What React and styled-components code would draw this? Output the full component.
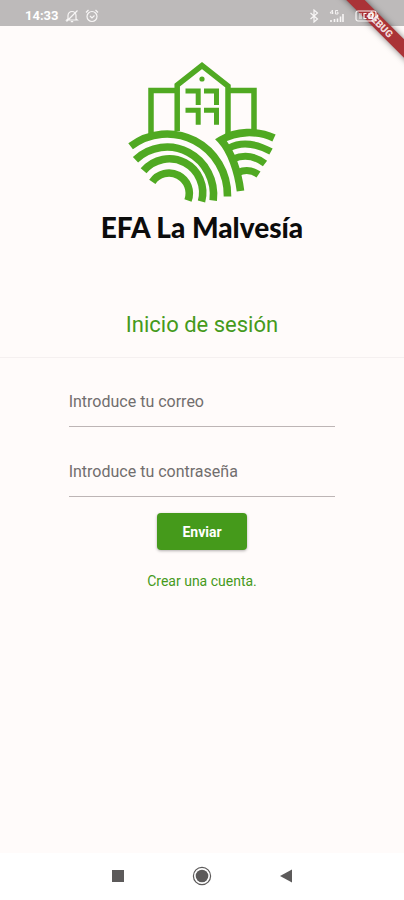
import React from "react";
import styled, { createGlobalStyle, ThemeProvider } from "styled-components";

const theme = {
  colors: {
    background: "#fffbfa",
    statusBar: "#bdbaba",
    green: "#459a1b",
    logo: "#50a922",
    hint: "#716e6e",
    line: "#bdb5b5",
    divider: "#f5f0f0",
    ribbon: "#aa3337",
    nav: "#5c5a5a",
  },
  font: `Roboto, "Liberation Sans", sans-serif`,
};

const GlobalStyle = createGlobalStyle`
  *, *::before, *::after {
    box-sizing: border-box;
  }

  body {
    margin: 0;
    font-family: ${theme.font};
    background-color: ${theme.colors.background};
  }
`;

const Screen = styled.div`
  position: relative;
  display: flex;
  flex-direction: column;
  min-height: 100vh;
  overflow: hidden;
`;

const StatusBarLayout = styled.header`
  display: flex;
  align-items: center;
  justify-content: space-between;
  height: 26px;
  padding: 6px 25px 0 25px;
  background-color: ${({ theme }) => theme.colors.statusBar};
  color: #fff;
`;

const StatusGroup = styled.div`
  position: relative;
  z-index: 2;
  display: flex;
  align-items: center;
  gap: ${({ $gap }) => $gap};
`;

const Clock = styled.time`
  font-size: 13px;
  line-height: 16px;
  font-weight: 700;
`;

const StatusIcon = styled.svg`
  display: block;
  fill: none;
  stroke: #f8f6f6;
  stroke-width: 1.2;
`;

const RibbonCorner = styled.div`
  position: absolute;
  z-index: 1;
  top: 0;
  right: 0;
  width: 80px;
  height: 80px;
  overflow: hidden;
  pointer-events: none;
`;

const Ribbon = styled.div`
  position: absolute;
  top: 18px;
  right: -36px;
  width: 120px;
  height: 13px;
  transform: rotate(45deg);
  background-color: ${({ theme }) => theme.colors.ribbon};
  box-shadow: 0 0 6px rgba(0, 0, 0, 0.5);
  color: #f3dcdc;
  font-size: 10px;
  line-height: 13px;
  font-weight: 900;
  text-align: center;
`;

const Content = styled.main`
  flex: 1;
  display: flex;
  flex-direction: column;
`;

const Brand = styled.div`
  display: flex;
  flex-direction: column;
  align-items: center;
  padding-top: 34px;
`;

const LogoDrawing = styled.svg`
  display: block;
  fill: none;
  stroke: ${({ theme }) => theme.colors.logo};
`;

const BrandName = styled.div`
  margin-top: 7px;
  font-family: Lato, "Liberation Sans", sans-serif;
  font-size: 28px;
  line-height: 32px;
  font-weight: 900;
  color: #0c0c0c;
`;

const Title = styled.h1`
  margin: 69px 0 0;
  padding-bottom: 19px;
  border-bottom: 1px solid ${({ theme }) => theme.colors.divider};
  font-size: 22px;
  line-height: 26px;
  font-weight: 400;
  text-align: center;
  color: ${({ theme }) => theme.colors.green};
`;

const Form = styled.form`
  display: flex;
  flex-direction: column;
  align-items: center;
  padding: 19px 17% 0;
`;

const Field = styled.input`
  width: 100%;
  height: 50px;
  margin-bottom: 20px;
  padding: 0;
  border: 0;
  border-bottom: 1px solid ${({ theme }) => theme.colors.line};
  border-radius: 0;
  outline: none;
  background: transparent;
  font-family: inherit;
  font-size: 16px;
  color: #222;

  &::placeholder {
    color: ${({ theme }) => theme.colors.hint};
    opacity: 1;
  }

  &:focus {
    border-color: ${({ theme }) => theme.colors.green};
  }
`;

const SubmitButton = styled.button`
  height: 37px;
  margin-top: -4px;
  padding: 0 25px;
  border: 0;
  border-radius: 4px;
  background-color: ${({ theme }) => theme.colors.green};
  box-shadow: 0 1px 3px rgba(0, 0, 0, 0.3);
  font-family: inherit;
  font-size: 14px;
  font-weight: 700;
  color: #fff;
  cursor: pointer;
`;

const SignUpLink = styled.a`
  margin-top: 22px;
  font-size: 14px;
  line-height: 18px;
  text-decoration: none;
  color: ${({ theme }) => theme.colors.green};
`;

const NavBar = styled.nav`
  display: flex;
  align-items: center;
  justify-content: center;
  gap: 60px;
  height: 47px;
  padding-bottom: 2px;
  background-color: #fff;
`;

const NavButton = styled.button`
  display: flex;
  align-items: center;
  justify-content: center;
  width: 24px;
  height: 24px;
  padding: 0;
  border: 0;
  background: none;
  color: ${({ theme }) => theme.colors.nav};
  cursor: pointer;
`;

const BellOffIcon = () => (
  <StatusIcon width="14" height="14" viewBox="0 0 14 14">
    <path d="M3 10V6.500a4 4 0 0 1 8 0V10l1.200 1H1.800zM5.800 12.700h2.400M12.500 1.500l-11 11" />
  </StatusIcon>
);

const AlarmIcon = () => (
  <StatusIcon width="14" height="14" viewBox="0 0 14 14">
    <circle cx="7" cy="7.500" r="5" />
    <path d="M1 3.500L3.500 1M13 3.500L10.500 1M5 7l2 2 2.500-2.500" />
  </StatusIcon>
);

const BluetoothIcon = () => (
  <StatusIcon width="10" height="14" viewBox="0 0 10 14">
    <path d="M1.500 4l7 6L5 13V1l3.500 3-7 6" />
  </StatusIcon>
);

const SignalIcon = () => (
  <StatusIcon width="16" height="14" viewBox="0 0 16 14">
    <path d="M3.500 5V1L1 4h3.500M9 1.500H6.500V5H9V3.200H7.800" strokeWidth="0.900" />
    <path d="M2 13v-2M5.500 13v-3M8.500 13V9.500M11.500 13V7.500M14 13V5" strokeWidth="1.600" />
  </StatusIcon>
);

const BatteryIcon = () => (
  <StatusIcon width="24" height="14" viewBox="0 0 24 14">
    <rect x="1" y="2" width="20" height="10" rx="2" />
    <path d="M22.500 5.500v3" strokeWidth="1.600" />
    <path d="M4 5h3M4 7h3M4 9h3M11.500 4.500H9v5h2.500M14 4.500h3.500v5H14zM14 7h3.500" />
  </StatusIcon>
);

const StatusBar = () => (
  <StatusBarLayout>
    <StatusGroup $gap="6px">
      <Clock>14:33</Clock>
      <BellOffIcon />
      <AlarmIcon />
    </StatusGroup>
    <StatusGroup $gap="10px">
      <BluetoothIcon />
      <SignalIcon />
      <BatteryIcon />
    </StatusGroup>
  </StatusBarLayout>
);

const Logo = () => (
  <LogoDrawing
    width="150"
    height="144"
    viewBox="127 60 150 144"
    role="img"
    aria-label="EFA La Malvesía"
  >
    {/* buildings */}
    <g strokeWidth="5.500">
      <path d="M151 134V90.500h26" />
      <path d="M177.200 131V85l24.800-19.500L228 86v49" />
      <path d="M228 90.500h26V132" />
    </g>
    <g strokeWidth="5">
      <path d="M185.500 91h12.700v14M185.500 110.200h12.700v14.500" />
      <path d="M204 91h12.500v14M204 110.200h12.500v14.500" />
    </g>
    <circle cx="202" cy="79" r="2.600" fill="#50a922" stroke="none" />
    {/* left field */}
    <g strokeWidth="7.600">
      <path d="M130.600 146.300A60.500 61.300 0 0 1 227.500 196.500" />
      <path d="M135.500 159.700A46.500 47.500 0 0 1 213.200 200.500" />
      <path d="M143.600 170.800A33.500 33.700 0 0 1 201.500 201.500" />
      <path d="M152.300 181.800A20.300 20.300 0 0 1 188 200.500" />
    </g>
    {/* right field */}
    <path
      d="M240.500 191C238 171 231 151 221 140C236 131 257 130 274 138"
      strokeWidth="7.600"
    />
    <g strokeWidth="7">
      <path d="M229 148C242 141 257 144 271 151.500" />
      <path d="M233 159C244 154 255 156 265 163.500" />
      <path d="M238 172.500C246 169 252 170 258.500 174.500" />
    </g>
  </LogoDrawing>
);

const LoginForm = () => (
  <Form onSubmit={(e) => e.preventDefault()}>
    <Field
      type="email"
      aria-label="Introduce tu correo"
      placeholder="Introduce tu correo"
    />
    <Field
      type="password"
      aria-label="Introduce tu contraseña"
      placeholder="Introduce tu contraseña"
    />
    <SubmitButton type="submit">Enviar</SubmitButton>
    <SignUpLink href="#registro">Crear una cuenta.</SignUpLink>
  </Form>
);

const SystemNav = () => (
  <NavBar>
    <NavButton type="button" aria-label="Recientes">
      <svg width="12" height="12" viewBox="0 0 12 12" fill="currentColor">
        <rect width="12" height="12" />
      </svg>
    </NavButton>
    <NavButton type="button" aria-label="Inicio">
      <svg width="20" height="20" viewBox="0 0 20 20" fill="currentColor">
        <circle cx="10" cy="10" r="6.300" />
        <circle
          cx="10"
          cy="10"
          r="8.600"
          fill="none"
          stroke="currentColor"
          strokeWidth="1.200"
        />
      </svg>
    </NavButton>
    <NavButton type="button" aria-label="Atrás">
      <svg width="12" height="14" viewBox="0 0 12 14" fill="currentColor">
        <path d="M0 7L12 0.500v13z" />
      </svg>
    </NavButton>
  </NavBar>
);

const App = () => (
  <ThemeProvider theme={theme}>
    <GlobalStyle />
    <Screen>
      <StatusBar />
      <RibbonCorner>
        <Ribbon>DEBUG</Ribbon>
      </RibbonCorner>
      <Content>
        <Brand>
          <Logo />
          <BrandName>EFA La Malvesía</BrandName>
        </Brand>
        <Title>Inicio de sesión</Title>
        <LoginForm />
      </Content>
      <SystemNav />
    </Screen>
  </ThemeProvider>
);

export default App;
